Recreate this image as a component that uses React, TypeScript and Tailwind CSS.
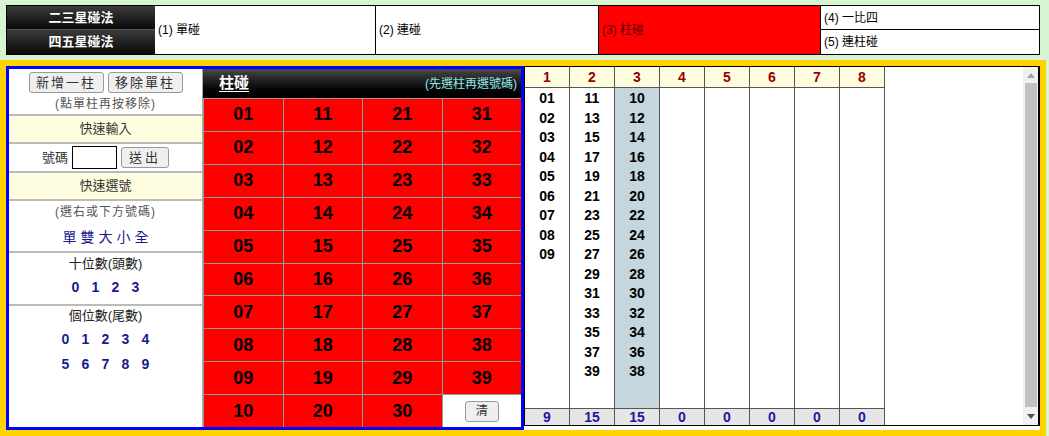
const col2 = [11, 13, 15, 17, 19, 21, 23, 25, 27, 29, 31, 33, 35, 37, 39];
const col3 = [10, 12, 14, 16, 18, 20, 22, 24, 26, 28, 30, 32, 34, 36, 38];
const col1 = [1, 2, 3, 4, 5, 6, 7, 8, 9];

const pad = (n: number) => String(n).padStart(2, "0");

const columns: { nums: number[]; active?: boolean }[] = [
  { nums: col1 },
  { nums: col2 },
  { nums: col3, active: true },
  { nums: [] },
  { nums: [] },
  { nums: [] },
  { nums: [] },
  { nums: [] },
];

const TopBar = () => (
  <div className="mx-[6px] mt-[5px] flex h-[50px] w-[1034px] border border-black bg-white text-[12px] text-black">
    <div className="flex w-[148px] flex-col text-[13px] font-bold text-white">
      <div className="flex h-[24px] items-center justify-center border-b border-[#555] bg-gradient-to-b from-[#3c3c3c] to-[#0a0a0a]">
        二三星碰法
      </div>
      <div className="flex flex-1 items-center justify-center bg-gradient-to-b from-[#3c3c3c] to-[#0a0a0a]">
        四五星碰法
      </div>
    </div>
    <div className="flex w-[220px] items-center pl-[3px]">(1) 單碰</div>
    <div className="flex w-[223px] items-center border-l border-black pl-[3px]">(2) 連碰</div>
    <div className="flex w-[222px] items-center border-l border-black bg-[#ff0000] pl-[3px] text-[#5a0000]">
      (3) 柱碰
    </div>
    <div className="flex flex-1 flex-col border-l border-black">
      <div className="flex h-[24px] items-center border-b border-black pl-[3px]">(4) 一比四</div>
      <div className="flex flex-1 items-center pl-[3px]">(5) 連柱碰</div>
    </div>
  </div>
);

const SideMenu = () => (
  <div className="flex w-[194px] flex-col border-r border-[#aaa] text-[12px] text-[#333]">
    <div className="flex h-[45px] flex-col items-center pt-[3px]">
      <div className="flex gap-[4px]">
        <button className="h-[21px] w-[75px] rounded-[3px] border border-[#999] bg-[#efefef] text-[13px] tracking-[2px] text-[#333]">
          新增一柱
        </button>
        <button className="h-[21px] w-[75px] rounded-[3px] border border-[#999] bg-[#efefef] text-[13px] tracking-[2px] text-[#333]">
          移除單柱
        </button>
      </div>
      <div className="mt-[2px] tracking-[1px] text-[#555]">(點單柱再按移除)</div>
    </div>
    <div className="flex h-[30px] items-center justify-center border-y-2 border-[#bbb] bg-[#fffde0] text-[13px]">
      快速輸入
    </div>
    <div className="flex h-[27px] items-center justify-center gap-[4px]">
      <span className="text-[13px]">號碼</span>
      <input className="h-[23px] w-[45px] border border-black bg-white" />
      <button className="h-[21px] w-[48px] rounded-[3px] border border-[#999] bg-[#efefef] text-[13px] tracking-[3px] text-[#333]">
        送出
      </button>
    </div>
    <div className="flex h-[30px] items-center justify-center border-y-2 border-[#bbb] bg-[#fffde0] text-[13px]">
      快速選號
    </div>
    <div className="flex h-[52px] flex-col items-center border-b-2 border-[#bbb]">
      <div className="mt-[2px] tracking-[1px] text-[#555]">(選右或下方號碼)</div>
      <div className="mt-[6px] flex gap-[4px] text-[14px] text-[#1a1a8c]">
        {["單", "雙", "大", "小", "全"].map((t) => (
          <span key={t}>{t}</span>
        ))}
      </div>
    </div>
    <div className="flex h-[53px] flex-col items-center border-b-2 border-[#bbb]">
      <div className="mt-[1px] text-[13px] text-[#222]">十位數(頭數)</div>
      <div className="mt-[3px] flex text-[14px] font-bold text-[#1a1a8c]">
        {[0, 1, 2, 3].map((n) => (
          <span key={n} className="w-[20px] text-center">{n}</span>
        ))}
      </div>
    </div>
    <div className="flex flex-1 flex-col items-center">
      <div className="text-[13px] text-[#222]">個位數(尾數)</div>
      <div className="mt-[3px] flex text-[14px] font-bold text-[#1a1a8c]">
        {[0, 1, 2, 3, 4].map((n) => (
          <span key={n} className="w-[20px] text-center">{n}</span>
        ))}
      </div>
      <div className="mt-[4px] flex text-[14px] font-bold text-[#1a1a8c]">
        {[5, 6, 7, 8, 9].map((n) => (
          <span key={n} className="w-[20px] text-center">{n}</span>
        ))}
      </div>
    </div>
  </div>
);

const NumberGrid = () => (
  <div className="flex flex-1 flex-col">
    <div className="flex h-[29px] items-center justify-between bg-gradient-to-b from-[#4a4a4a] to-[#000] pl-[16px] pr-[4px]">
      <span className="text-[15px] font-bold text-white underline underline-offset-[3px]">柱碰</span>
      <span className="text-[12px] text-[#8ee8e8]">(先選柱再選號碼)</span>
    </div>
    <div className="grid flex-1 grid-cols-4 grid-rows-10">
      {Array.from({ length: 10 }).map((_, r) =>
        [0, 1, 2, 3].map((c) => {
          const n = c * 10 + r + 1;
          if (n === 40)
            return (
              <div key={n} className="flex items-center justify-center border-t border-l border-[#999] bg-white">
                <button className="h-[21px] w-[34px] rounded-[3px] border border-[#999] bg-[#efefef] text-[12px] text-[#333]">
                  清
                </button>
              </div>
            );
          return (
            <div
              key={n}
              className="flex items-center justify-center border-t border-l border-[#999] bg-[#ff0000] text-[18px] font-bold text-black"
            >
              {pad(n)}
            </div>
          );
        })
      )}
    </div>
  </div>
);

const ColumnTable = () => (
  <div className="flex h-[360px] w-[516px] border border-r-2 border-black bg-white">
    <div className="flex w-[360px] flex-col">
      <div className="flex h-[21px] border-b border-[#555] bg-[#fffde0]">
        {columns.map((_, i) => (
          <div
            key={i}
            className="flex w-[45px] items-center justify-center border-r border-[#555] text-[14px] font-bold text-[#990000]"
          >
            {i + 1}
          </div>
        ))}
      </div>
      <div className="flex flex-1">
        {columns.map((col, i) => (
          <div
            key={i}
            className={`flex w-[45px] flex-col items-center border-r border-[#555] pt-[1px] text-[14px] font-bold leading-[19.5px] text-black ${
              col.active ? "bg-[#c5d6df]" : "bg-white"
            }`}
          >
            {col.nums.map((n) => (
              <span key={n}>{pad(n)}</span>
            ))}
          </div>
        ))}
      </div>
      <div className="flex h-[17px] border-t border-[#555] bg-[#e6e6e6]">
        {columns.map((col, i) => (
          <div
            key={i}
            className="flex w-[45px] items-center justify-center border-r border-[#555] text-[14px] font-bold text-[#1a1a9c]"
          >
            {col.nums.length}
          </div>
        ))}
      </div>
    </div>
    <div className="flex-1" />
    <div className="flex w-[15px] flex-col items-center bg-[#f1f1f1]">
      <div className="flex h-[16px] items-center justify-center">
        <svg width="8" height="5" viewBox="0 0 8 5">
          <path d="M0 5 L4 0 L8 5 Z" fill="#a3a3a3" />
        </svg>
      </div>
      <div className="w-[12px] flex-1 bg-[#c1c1c1]" />
      <div className="flex h-[18px] items-center justify-center">
        <svg width="8" height="5" viewBox="0 0 8 5">
          <path d="M0 0 L8 0 L4 5 Z" fill="#505050" />
        </svg>
      </div>
    </div>
  </div>
);

export default function App() {
  return (
    <div className="h-[436px] w-[1049px] overflow-hidden bg-[#d6f5d0] font-['Liberation_Sans','Noto_Sans_CJK_TC',sans-serif]">
      <TopBar />
      <div className="mt-[5px] flex w-[1046px] border-[6px] border-[#ffd200] bg-white">
        <div className="flex h-[364px] w-[518px] border-[3px] border-[#0000ff] bg-white">
          <SideMenu />
          <NumberGrid />
        </div>
        <ColumnTable />
      </div>
    </div>
  );
}
